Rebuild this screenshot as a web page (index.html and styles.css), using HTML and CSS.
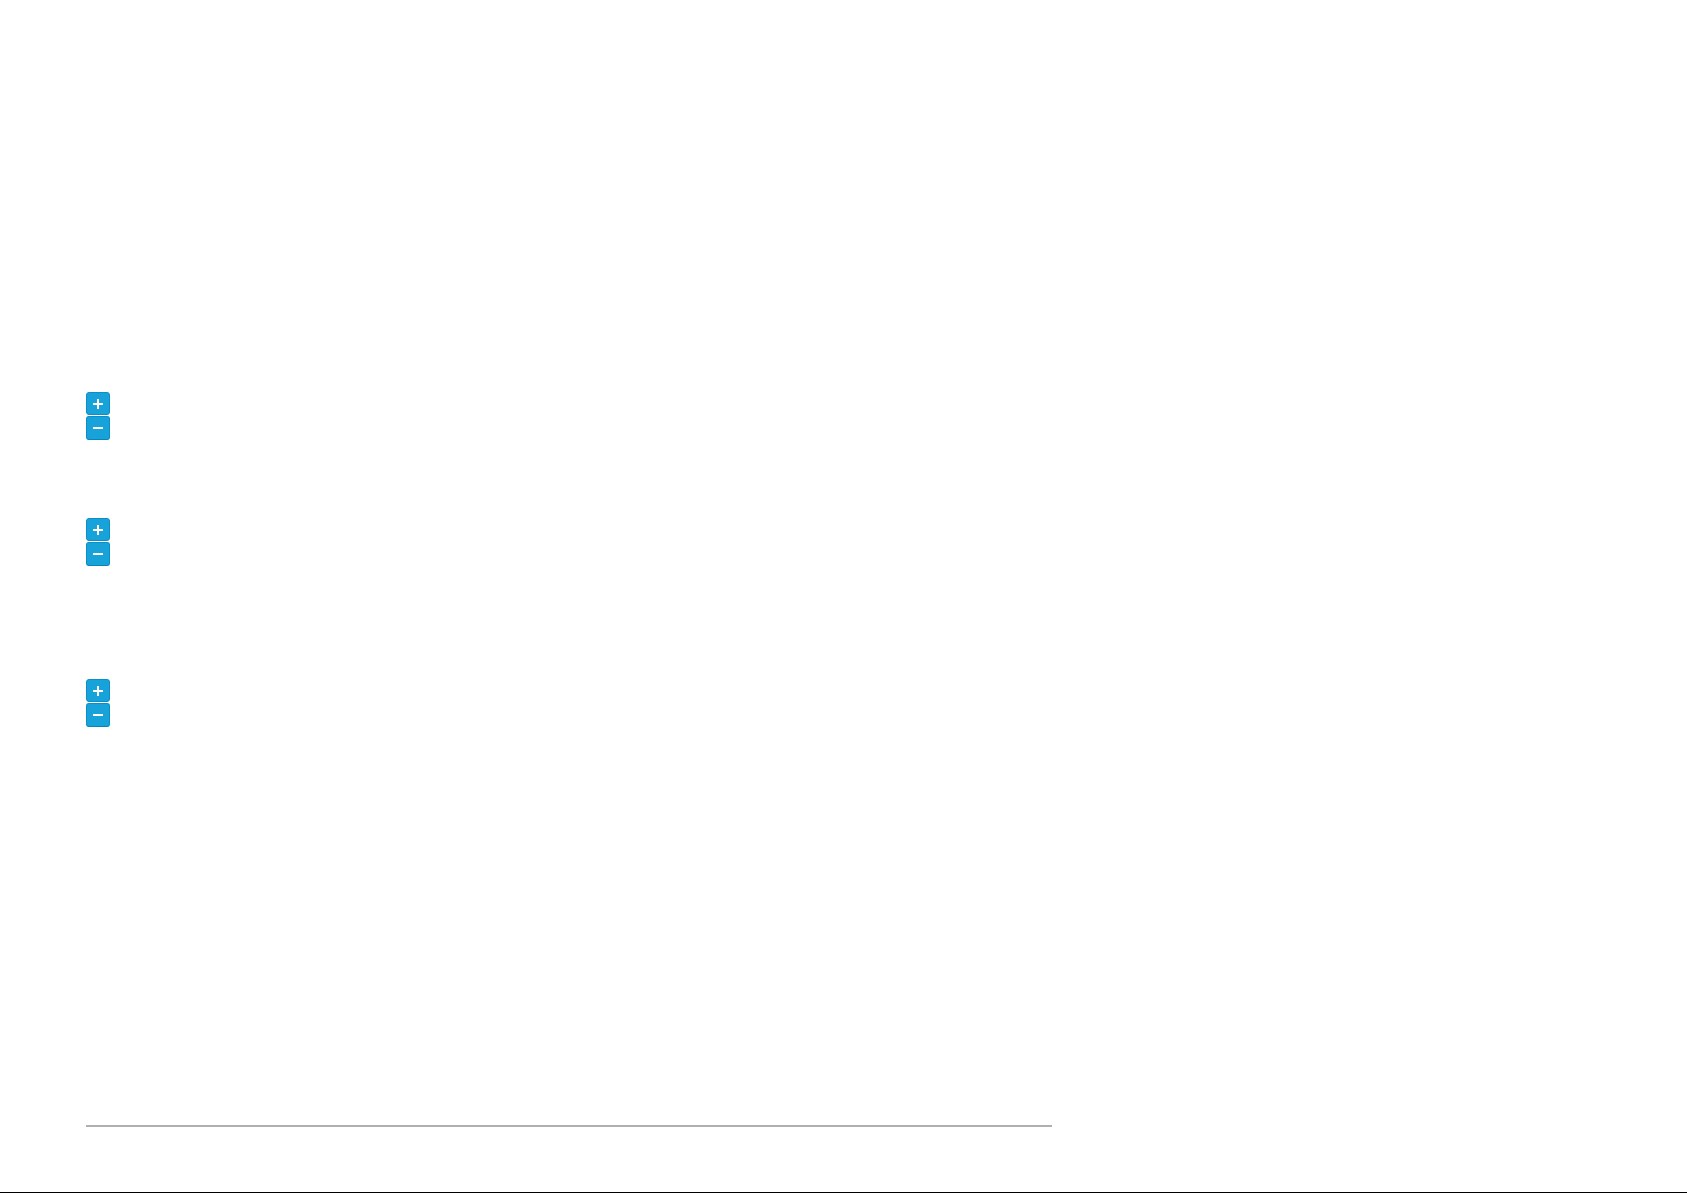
FILE: index.html
```html
<!DOCTYPE html>
<html lang="en">
<head>
<meta charset="utf-8">
<title>Maps</title>
<link rel="stylesheet" href="styles.css">
</head>
<body>
<div class="page">
  <div class="zoom zoom-1">
    <button class="zbtn zin" aria-label="Zoom in"><svg width="12" height="12" viewBox="0 0 12 12"><path d="M6 1v10M1 6h10" stroke="#fff" stroke-width="2" fill="none"/></svg></button>
    <button class="zbtn zout" aria-label="Zoom out"><svg width="12" height="12" viewBox="0 0 12 12"><path d="M1 6h10" stroke="#fff" stroke-width="2" fill="none"/></svg></button>
  </div>
  <div class="zoom zoom-2">
    <button class="zbtn zin" aria-label="Zoom in"><svg width="12" height="12" viewBox="0 0 12 12"><path d="M6 1v10M1 6h10" stroke="#fff" stroke-width="2" fill="none"/></svg></button>
    <button class="zbtn zout" aria-label="Zoom out"><svg width="12" height="12" viewBox="0 0 12 12"><path d="M1 6h10" stroke="#fff" stroke-width="2" fill="none"/></svg></button>
  </div>
  <div class="zoom zoom-3">
    <button class="zbtn zin" aria-label="Zoom in"><svg width="12" height="12" viewBox="0 0 12 12"><path d="M6 1v10M1 6h10" stroke="#fff" stroke-width="2" fill="none"/></svg></button>
    <button class="zbtn zout" aria-label="Zoom out"><svg width="12" height="12" viewBox="0 0 12 12"><path d="M1 6h10" stroke="#fff" stroke-width="2" fill="none"/></svg></button>
  </div>
  <div class="rule"></div>
  <div class="bottom-bar"></div>
</div>
</body>
</html>
```

FILE: styles.css
```css
html, body {
  margin: 0;
  padding: 0;
  background: #ffffff;
  font-family: "Liberation Sans", Arial, sans-serif;
}
.page {
  display: flex;
  flex-direction: column;
  height: 1193px;
  overflow: hidden;
}
.zoom {
  display: flex;
  flex-direction: column;
  gap: 1px;
  width: 24px;
  margin-left: 86px;
}
.zoom-1 { margin-top: 392px; }
.zoom-2 { margin-top: 78px; }
.zoom-3 { margin-top: 113px; }
.zbtn {
  width: 24px;
  height: 23px;
  padding: 0;
  margin: 0;
  border: 1px solid #0c8fc6;
  border-radius: 3px;
  background: #17a2d9;
  display: flex;
  align-items: center;
  justify-content: center;
  box-sizing: border-box;
}
.zbtn svg { display: block; }
.zout { height: 24px; border-bottom-color: #0a84b8; }
.rule {
  margin-top: 398px;
  margin-left: 86px;
  width: 966px;
  height: 2px;
  background: #b0b0b0;
}
.bottom-bar {
  margin-top: 65px;
  height: 2px;
  background: #000000;
}
```
